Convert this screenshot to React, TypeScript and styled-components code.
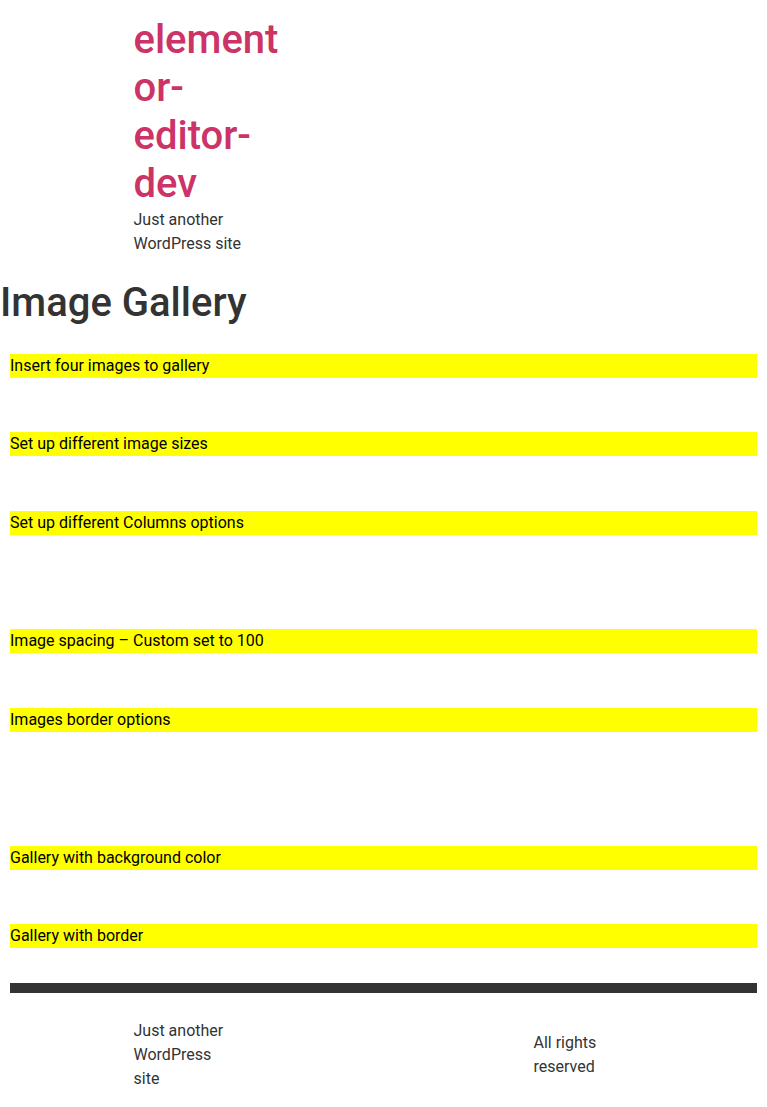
import styled, { createGlobalStyle } from 'styled-components';

const GlobalStyle = createGlobalStyle`
  body {
    margin: 0;
    font-family: Roboto, "Liberation Sans", sans-serif;
    font-size: 16px;
    line-height: 1.5;
    color: #333;
    background: #fff;
  }
  * { box-sizing: border-box; }
`;

const steps: { text: string; gap: number }[] = [
  { text: 'Insert four images to gallery', gap: 54 },
  { text: 'Set up different image sizes', gap: 55 },
  { text: 'Set up different Columns options', gap: 94 },
  { text: 'Image spacing – Custom set to 100', gap: 55 },
  { text: 'Images border options', gap: 114 },
  { text: 'Gallery with background color', gap: 54 },
  { text: 'Gallery with border', gap: 35 },
];

const App = () => {
  return (
    <>
      <GlobalStyle />
      <Header>
        <Inner>
          <Branding $width={150}>
            <SiteTitle>element or-editor-dev</SiteTitle>
            <Tagline>Just another WordPress site</Tagline>
          </Branding>
        </Inner>
      </Header>
      <Main>
        <PageTitle>Image Gallery</PageTitle>
        <Content>
          {steps.map((s) => (
            <Highlight key={s.text} $gap={s.gap}>
              {s.text}
            </Highlight>
          ))}
          <Divider />
        </Content>
      </Main>
      <Footer>
        <Inner>
          <Branding $width={100}>
            <Tagline>Just another WordPress site</Tagline>
          </Branding>
          <Copyright>All rights reserved</Copyright>
        </Inner>
      </Footer>
    </>
  );
};

export default App;

const Header = styled.header`
  padding: 16px 0 15px;
`;

const Inner = styled.div`
  max-width: 500px;
  margin: 0 auto;
  display: flex;
  justify-content: space-between;
  align-items: center;
`;

const Branding = styled.div<{ $width: number }>`
  width: ${(p) => p.$width}px;
`;

const SiteTitle = styled.h1`
  margin: 0;
  font-size: 40px;
  font-weight: 500;
  line-height: 48px;
  color: #cc3366;
  overflow-wrap: break-word;
`;

const Tagline = styled.p`
  margin: 0;
  font-size: 16px;
  line-height: 24px;
  color: #333;
`;

const Main = styled.main`
  padding-top: 8px;
`;

const PageTitle = styled.h1`
  margin: 0 0 27px;
  font-size: 40px;
  font-weight: 500;
  line-height: 48px;
  color: #333;
`;

const Content = styled.div`
  padding: 0 10px;
`;

const Highlight = styled.p<{ $gap: number }>`
  margin: 0 0 ${(p) => p.$gap}px;
  background: #ffff00;
  color: #000;
  font-size: 16px;
  line-height: 24px;
`;

const Divider = styled.hr`
  margin: 0;
  height: 10px;
  border: 0;
  background: #333;
`;

const Footer = styled.footer`
  padding: 26px 0;
`;

const Copyright = styled.p`
  margin: 0;
  width: 100px;
  font-size: 16px;
  line-height: 24px;
  color: #333;
`;
